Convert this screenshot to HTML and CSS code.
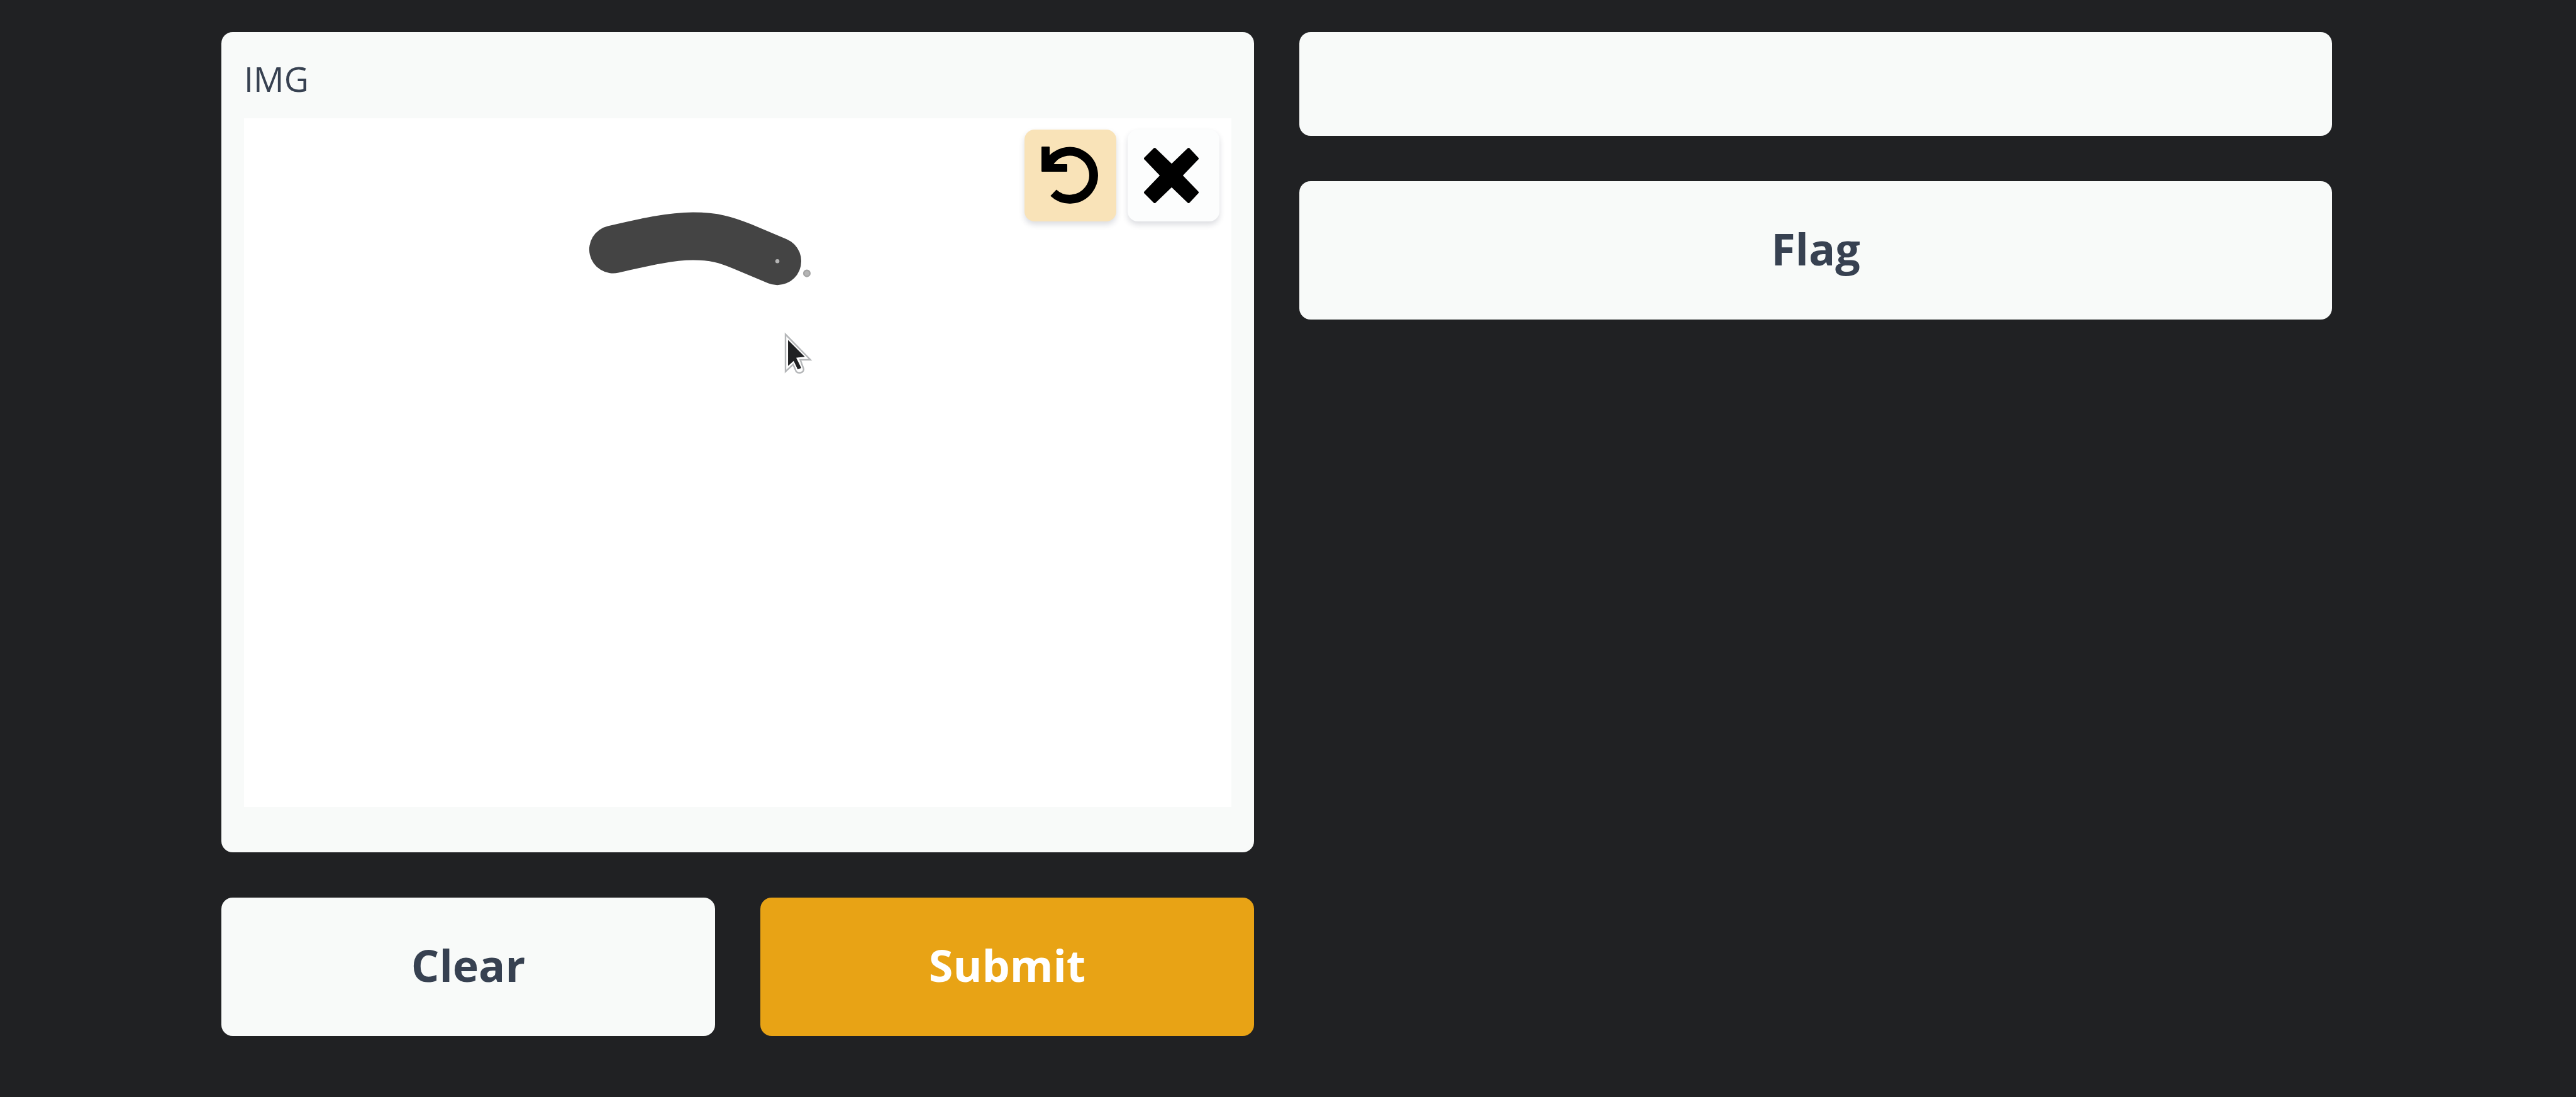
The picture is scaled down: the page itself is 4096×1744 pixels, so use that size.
FILE: index.html
```html
<!DOCTYPE html>
<html lang="en">
<head>
<meta charset="utf-8">
<title>Sketchpad</title>
<link rel="stylesheet" href="styles.css">
</head>
<body>
<main class="interface">
  <div class="column">
    <section class="panel sketch" aria-labelledby="sketch-title">
      <h2 class="panel-title" id="sketch-title">IMG</h2>
      <div class="canvas">
        <svg class="drawing" viewBox="0 0 1942 1355" aria-hidden="true">
          <path d="M726 258C790 243 840 232 883 232C925 232 948 239 980 252L1049 281" fill="none" stroke="#444" stroke-width="94" stroke-linecap="round" stroke-linejoin="round"/>
          <circle cx="1049" cy="281" r="4" fill="#b4b4b4"/>
          <circle cx="1107" cy="305" r="6" fill="#b4b4b4" stroke="#a4a4a4" stroke-width="3"/>
          <path class="pointer" d="M1065 425V498L1080 484L1086 498Q1091 503 1098 499Q1102 496 1100 491L1094 475H1114Z" fill="#fff" stroke="#b4b6b8" stroke-width="3"/>
          <path d="M1070 436V487L1081 477L1089 494L1096 491L1086 471L1103 469Z" fill="#202123"/>
        </svg>
        <div class="tools">
          <button class="tool tool-undo" type="button" aria-label="Undo">
            <svg class="icon" viewBox="0 0 146 146" aria-hidden="true">
              <path d="M38 55.500A38 38 0 1 1 46 100.500" fill="none" stroke="#000" stroke-width="14"/>
              <path d="M28 27H39Q40 27 40 28V55H67Q68 55 68 56V66Q68 67 67 67H28Q27 67 27 66V28Q27 27 28 27Z"/>
            </svg>
          </button>
          <button class="tool" type="button" aria-label="Clear drawing">
            <svg class="icon" viewBox="0 0 146 146" aria-hidden="true">
              <path d="M43 31L70 57L97 31L111 46L85 73L111 100L97 115L70 89L43 115L28 100L54 73L28 46Z" stroke="#000" stroke-width="4" stroke-linejoin="round"/>
            </svg>
          </button>
        </div>
      </div>
    </section>
    <div class="actions">
      <button class="button" type="button">Clear</button>
      <button class="button button-primary" type="submit">Submit</button>
    </div>
  </div>
  <div class="column">
    <output class="panel result"></output>
    <button class="button" type="button">Flag</button>
  </div>
</main>
</body>
</html>
```

FILE: styles.css
```css
* {
  box-sizing: border-box;
}

body {
  margin: 0;
  background: #202123;
  color: #374151;
  font-family: "Open Sans", "Noto Sans", sans-serif;
}

.interface {
  display: grid;
  grid-template-columns: 1fr 1fr;
  align-items: start;
  gap: 72px;
  padding: 51px 388px 72px 352px;
}

.column {
  display: flex;
  flex-direction: column;
  gap: 72px;
}

.panel {
  display: block;
  border-radius: 18px;
  background: #f8faf9;
}

.sketch {
  padding: 36px 36px 72px;
}

.panel-title {
  margin: 0 0 25px;
  font-size: 54px;
  font-weight: 400;
  line-height: 76px;
}

.canvas {
  position: relative;
  background: #fff;
}

.drawing {
  display: block;
  width: 100%;
  height: auto;
}

.tools {
  position: absolute;
  top: 18px;
  right: 19px;
  display: flex;
  gap: 18px;
}

.tool {
  width: 146px;
  height: 146px;
  padding: 0;
  border: 0;
  border-radius: 16px;
  background: #fcfdfd;
  box-shadow: 0 5px 10px rgba(30, 40, 60, 0.16);
}

.tool-undo {
  background: #f9e3b8;
}

.icon {
  display: block;
  width: 100%;
  height: 100%;
}

.actions {
  display: grid;
  grid-template-columns: 1fr 1fr;
  gap: 72px;
}

.button {
  width: 100%;
  padding: 53px 36px 59px;
  border: 0;
  border-radius: 18px;
  background: #f8faf9;
  color: #374151;
  font: 700 70px/108px "Open Sans", "Noto Sans", sans-serif;
}

.button-primary {
  background: #e8a315;
  color: #fff;
}

.result {
  min-height: 165px;
}
```
